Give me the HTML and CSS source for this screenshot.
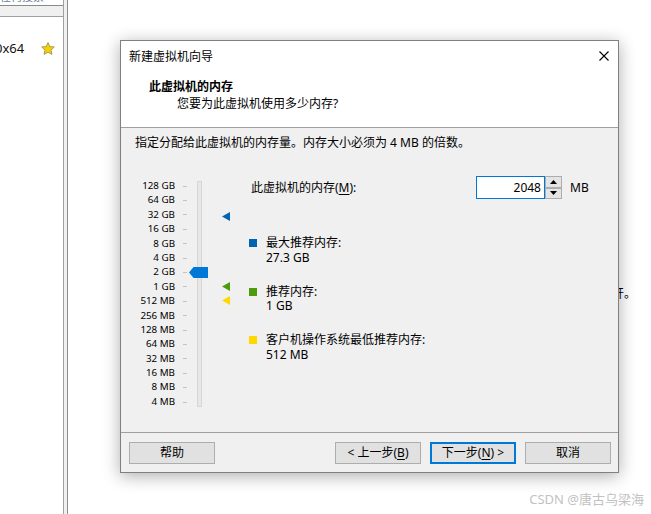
FILE: index.html
```html
<!DOCTYPE html>
<html lang="zh-CN">
<head>
<meta charset="utf-8">
<title>新建虚拟机向导</title>
<link rel="stylesheet" href="styles.css">
</head>
<body>
<div class="desk">
  <div class="leftpane">
    <div class="search"><span>任何搜索</span></div>
    <div class="list">
      <div class="item">
        <span class="itemtext">0x64</span>
        <svg class="star" width="14" height="13" viewBox="0 0 14 13"><polygon points="7,0.6 8.9,4.6 13.3,5 10,8 10.9,12.4 7,10.2 3.1,12.4 4,8 0.7,5 5.1,4.6" fill="#f6d000" stroke="#9a8a50" stroke-width="0.8"/></svg>
      </div>
    </div>
  </div>
  <div class="strip"></div>
  <div class="page"><p class="bgtext">开。</p></div>
</div>

<div class="dialog">
  <div class="header">
    <div class="titlebar">
      <span class="title">新建虚拟机向导</span>
      <svg class="close" width="10" height="10" viewBox="0 0 10 10"><path d="M0.5 0.5 L9.5 9.5 M9.5 0.5 L0.5 9.5" stroke="#000" stroke-width="1.1"/></svg>
    </div>
    <div class="heading">此虚拟机的内存</div>
    <div class="sub">您要为此虚拟机使用多少内存?</div>
  </div>

  <div class="body">
    <p class="intro">指定分配给此虚拟机的内存量。内存大小必须为 4 MB 的倍数。</p>
    <div class="content">
      <div class="slider">
        <ul class="labels">
          <li><span>128 GB</span><i></i></li>
          <li><span>64 GB</span><i></i></li>
          <li><span>32 GB</span><i></i></li>
          <li><span>16 GB</span><i></i></li>
          <li><span>8 GB</span><i></i></li>
          <li><span>4 GB</span><i></i></li>
          <li><span>2 GB</span><i></i></li>
          <li><span>1 GB</span><i></i></li>
          <li><span>512 MB</span><i></i></li>
          <li><span>256 MB</span><i></i></li>
          <li><span>128 MB</span><i></i></li>
          <li><span>64 MB</span><i></i></li>
          <li><span>32 MB</span><i></i></li>
          <li><span>16 MB</span><i></i></li>
          <li><span>8 MB</span><i></i></li>
          <li><span>4 MB</span><i></i></li>
        </ul>
        <div class="track"></div>
        <div class="thumb"></div>
        <div class="marker marker-max"></div>
        <div class="marker marker-rec"></div>
        <div class="marker marker-min"></div>
      </div>

      <div class="info">
        <div class="memrow">
          <span class="memlabel">此虚拟机的内存(<u>M</u>):</span>
          <div class="spin">
            <div class="spinbox">2048</div>
            <div class="spinbtns">
              <div class="sbtn"><svg width="7" height="4" viewBox="0 0 7 4"><polygon points="0,4 7,4 3.5,0" fill="#000"/></svg></div>
              <div class="sbtn"><svg width="7" height="4" viewBox="0 0 7 4"><polygon points="0,0 7,0 3.5,4" fill="#000"/></svg></div>
            </div>
          </div>
          <span class="unit">MB</span>
        </div>

        <div class="legend">
          <div class="litem">
            <span class="sq sq-max"></span>
            <div class="ltext"><div>最大推荐内存:</div><div>27.3 GB</div></div>
          </div>
          <div class="litem">
            <span class="sq sq-rec"></span>
            <div class="ltext"><div>推荐内存:</div><div>1 GB</div></div>
          </div>
          <div class="litem">
            <span class="sq sq-min"></span>
            <div class="ltext"><div>客户机操作系统最低推荐内存:</div><div>512 MB</div></div>
          </div>
        </div>
      </div>
    </div>
  </div>

  <div class="footer">
    <button class="btn">帮助</button>
    <div class="spacer"></div>
    <button class="btn">&lt; 上一步(<u>B</u>)</button>
    <button class="btn btn-default">下一步(<u>N</u>) &gt;</button>
    <button class="btn">取消</button>
  </div>
</div>

<div class="watermark">CSDN @唐古乌梁海</div>
</body>
</html>
```

FILE: styles.css
```css
* { box-sizing: border-box; }

html, body {
  margin: 0;
  padding: 0;
  width: 651px;
  height: 514px;
  overflow: hidden;
  background: #ffffff;
  font-family: "Noto Sans", "Noto Sans CJK SC", sans-serif;
  font-size: 12px;
  color: #000;
}

/* ---------- background application ---------- */
.desk {
  display: flex;
  height: 514px;
}

.leftpane {
  width: 64px;
  background: #f0f0f0;
  border-right: 1px solid #a0a0a0;
  display: flex;
  flex-direction: column;
}

.search {
  height: 6px;
  background: #fff;
  border-bottom: 1px solid #8a8a8a;
  overflow: hidden;
  font-size: 11px;
  color: #6a7a9a;
  line-height: 12px;
}
.search span { display: block; margin-top: -9px; }

.list {
  margin-top: 10px;
  flex: 1;
  background: #fff;
  border-top: 1px solid #a0a0a0;
}

.item {
  display: flex;
  align-items: center;
  height: 20px;
  margin-top: 21px;
  overflow: hidden;
}
.itemtext {
  margin-left: -5px;
  font-size: 13px;
  color: #111;
}
.star { margin-left: 17px; }

.strip {
  width: 4px;
  background: #f0f0f0;
  border-right: 1px solid #8c8c8c;
}

.page {
  flex: 1;
  padding-top: 284px;
  padding-right: 15px;
  text-align: right;
}
.bgtext {
  margin: 0;
  line-height: 18px;
  font-family: "Noto Sans CJK SC", sans-serif;
}

/* ---------- dialog ---------- */
.dialog {
  position: absolute;
  left: 120px;
  top: 40px;
  width: 499px;
  height: 433px;
  border: 1px solid #808080;
  background: #f0f0f0;
  box-shadow: 0 3px 16px rgba(0, 0, 0, 0.32);
  display: flex;
  flex-direction: column;
}

.header {
  height: 87px;
  background: #fff;
  border-bottom: 1px solid #a0a0a0;
}

.titlebar {
  height: 29px;
  display: flex;
  align-items: center;
  justify-content: space-between;
  padding: 0 9px 0 8px;
}
.title { line-height: 29px; padding-top: 1px; }
.close { display: block; }

.heading {
  margin-top: 8px;
  padding-left: 28px;
  font-weight: bold;
  line-height: 17px;
}
.sub {
  padding-left: 56px;
  line-height: 17px;
}

.body {
  height: 304px;
  padding: 6px 14px 0 14px;
}

.intro {
  margin: 0;
  line-height: 18px;
}

.content {
  display: flex;
  margin-top: 24px;
}

/* slider */
.slider {
  position: relative;
  width: 114px;
  padding-top: 3px;
}

.labels {
  list-style: none;
  margin: 0;
  padding: 0;
}
.labels li {
  display: flex;
  align-items: center;
  height: 14.4px;
}
.labels span {
  width: 40px;
  text-align: right;
  font-size: 9.8px;
  color: #000;
  line-height: 14.4px;
}
.labels i {
  display: block;
  width: 4px;
  height: 1px;
  margin-left: 8px;
  background: #c4c4c4;
}

.track {
  position: absolute;
  left: 62px;
  top: 5px;
  width: 5px;
  height: 226px;
  background: #e7e7e7;
  border: 1px solid #d6d6d6;
}

.thumb {
  position: absolute;
  left: 54px;
  top: 91px;
  width: 19px;
  height: 11px;
  background: #0078d7;
  clip-path: polygon(0 50%, 24% 0, 100% 0, 100% 100%, 24% 100%);
}

.marker {
  position: absolute;
  left: 87px;
  width: 8px;
  height: 9px;
  clip-path: polygon(0 50%, 100% 0, 100% 100%);
}
.marker-max { top: 36px; background: #0063b1; }
.marker-rec { top: 106px; background: #4c9a0e; }
.marker-min { top: 120px; background: #ffd800; }

/* info column */
.info {
  flex: 1;
}

.memrow {
  display: flex;
  align-items: center;
  height: 23px;
  padding-left: 2px;
}
.memlabel {
  width: 225px;
  line-height: 18px;
}
.memlabel u { text-underline-offset: 2px; }

.spin {
  display: flex;
  height: 23px;
}
.spinbox {
  width: 69px;
  height: 23px;
  border: 1px solid #0078d7;
  background: #fff;
  text-align: right;
  padding-right: 3px;
  line-height: 21px;
}
.spinbtns {
  width: 17px;
  display: flex;
  flex-direction: column;
}
.sbtn {
  flex: 1;
  display: flex;
  align-items: center;
  justify-content: center;
  background: #e4e4e4;
  border: 1px solid #adadad;
}
.sbtn svg { display: block; }
.unit { margin-left: 8px; }

.legend {
  display: flex;
  flex-direction: column;
  gap: 19.5px;
  padding-top: 37px;
}
.litem {
  display: flex;
  align-items: flex-start;
}
.sq {
  width: 8px;
  height: 8px;
  margin-top: 3px;
  margin-right: 9px;
  flex: none;
}
.sq-max { background: #0063b1; }
.sq-rec { background: #4c9a0e; }
.sq-min { background: #ffd800; }
.ltext { line-height: 14.5px; }

/* footer */
.footer {
  flex: 1;
  border-top: 1px solid #a0a0a0;
  display: flex;
  align-items: flex-start;
  padding: 9px 7px 0 8px;
  gap: 9px;
}
.spacer { flex: 1; }

.btn {
  width: 86px;
  height: 22px;
  margin: 0;
  padding: 0;
  background: #e1e1e1;
  border: 1px solid #adadad;
  font-family: "Noto Sans", "Noto Sans CJK SC", sans-serif;
  font-size: 12px;
  color: #000;
  line-height: 18px;
}
.btn u { text-underline-offset: 2px; }
.btn-default {
  border: 2px solid #0078d7;
}

.watermark {
  position: absolute;
  right: 7px;
  top: 490px;
  font-size: 13px;
  line-height: 18px;
  color: #c2c2c2;
  font-family: "Noto Sans", "Noto Sans CJK SC", sans-serif;
}
```
